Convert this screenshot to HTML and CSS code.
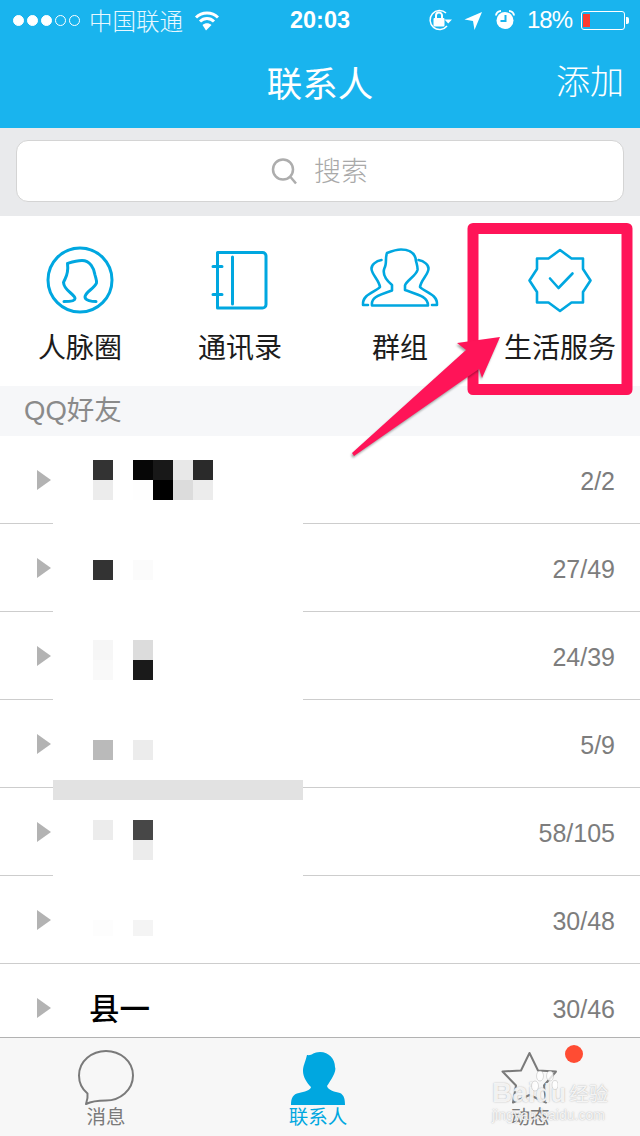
FILE: index.html
```html
<!DOCTYPE html>
<html lang="zh-CN">
<head>
<meta charset="utf-8">
<title>联系人</title>
<link rel="stylesheet" href="styles.css">
</head>
<body>
<div class="app">
  <header class="header">
    <div class="status">
      <div class="status-left">
        <div class="signal"><i class="dot on"></i><i class="dot on"></i><i class="dot on"></i><i class="dot"></i><i class="dot"></i></div>
        <span class="carrier">中国联通</span>
        <svg class="wifi" viewBox="195 9 25 21" width="25" height="21"><path d="M197 16.5C203 10.5 213 10.5 219 16.5" class="wf"/><path d="M201 20.5C205 16.5 211 16.5 215 20.5" class="wf"/><path d="M203.500 24L207 29.500 212.500 24C210 21.500 206 21.500 203.500 24Z" class="wfill"/></svg>
      </div>
      <div class="time">20:03</div>
      <div class="status-right">
        <svg class="st-icons" viewBox="428 8 88 24" width="88" height="24">
          <path d="M446 13A9.500 9.500 0 1 0 447 26" class="st-line"/>
          <path d="M444.500 19.500H452L448.200 23.500Z" class="st-fill"/>
          <rect x="433.500" y="18" width="11" height="8.500" rx="1" class="st-fill"/>
          <path d="M436 18V15.500A3 3 0 0 1 442 15.500V18" class="st-line2"/>
          <path d="M464.500 19.500L482 12 474.500 30 473 21Z" class="st-fill"/>
          <circle cx="505" cy="20.500" r="8.500" class="st-fill"/>
          <path d="M505.500 15V21H500.500" class="st-blue"/>
          <path d="M496 15.500A5 5 0 0 1 501 11" class="st-line2"/>
          <path d="M514 15.500A5 5 0 0 0 509 11" class="st-line2"/>
        </svg>
        <span class="pct">18%</span>
        <div class="battery"><div class="battery-level"></div></div>
        <div class="battery-nub"></div>
      </div>
    </div>
    <div class="nav">
      <h1 class="nav-title">联系人</h1>
      <span class="nav-action">添加</span>
    </div>
  </header>

  <div class="search-wrap">
    <div class="search">
      <svg viewBox="270 155 30 30" width="30" height="30"><circle cx="283" cy="168.500" r="10" class="search-ic"/><path d="M290.500 176L296 182.500" class="search-ic"/></svg>
      <span>搜索</span>
    </div>
  </div>

  <nav class="quick">
    <a class="quick-item">
      <svg viewBox="40 240 80 80" width="80" height="80"><circle cx="80" cy="280" r="32" class="ic"/><path d="M64 301.500C68 301.500 75 301 75 298.500C75 294 64 291 63.500 282.500C65 278 69 275 67.500 263.500C72 262 76 260.500 82 260.500C90 260.500 94 268 95 275C96 279 97 281 96.500 283C94 289 85 292 85 297C85 300.500 92 301.500 96 301.500" class="ic"/></svg>
      <span>人脉圈</span>
    </a>
    <a class="quick-item">
      <svg viewBox="200 240 80 80" width="80" height="80"><path d="M217.500 252.500H262.500A3.500 3.500 0 0 1 266 256V304.500A3.500 3.500 0 0 1 262.500 308H217.500Z" class="ic"/><path d="M232.500 257V304M213 266.500H222M213 294.500H222" class="ic"/></svg>
      <span>通讯录</span>
    </a>
    <a class="quick-item">
      <svg viewBox="360 240 80 80" width="80" height="80"><path d="M372 305.500C371 298 376 296 392 290.500V285C385 279 382 274 384.500 268C387 264 385 258 387 253C392 251 396 249.500 401 249.500C409 249.500 414 253 415.500 258C416 263 418 266 417.500 270C416 276 406 281 405 285.500V290C416 294 428 296 428 305.500Z" class="ic2"/><path d="M381.500 260C376 261 371 265 371.500 269C372 275 379 280 380 287C376 292 362 294 363 305H368" class="ic2"/><path d="M418.500 260C424 261 429 265 428.500 269C428 275 421 280 420 287C424 292 438 294 437 305H432" class="ic2"/></svg>
      <span>群组</span>
    </a>
    <a class="quick-item">
      <svg viewBox="520 240 80 80" width="80" height="80"><path d="M560 250L571.500 258.500H583V269L590.500 280.500 583 292V302.500H571.500L560 311 548.500 302.500H537V292L529.500 280.500 537 269V258.500H548.500Z" class="ic2"/><path d="M550 278.500L558.500 288 572.500 273.500" class="ic2"/></svg>
      <span>生活服务</span>
    </a>
  </nav>

  <div class="section">QQ好友</div>

  <div class="list">
    <div class="row"><i class="tri"></i><span class="count">2/2</span></div>
    <div class="row"><i class="tri"></i><span class="count">27/49</span></div>
    <div class="row"><i class="tri"></i><span class="count">24/39</span></div>
    <div class="row"><i class="tri"></i><span class="count">5/9</span></div>
    <div class="row"><i class="tri"></i><span class="count">58/105</span></div>
    <div class="row"><i class="tri"></i><span class="count">30/48</span></div>
    <div class="row"><i class="tri"></i><span class="name">县一</span><span class="count">30/46</span></div>

    <div class="mosaic">
      <b class="mask"></b>
      <b class="bar"></b>
      <b class="c2 y1 g33"></b><b class="c2 y2 ge"></b>
      <b class="c4 y1 g06"></b><b class="c4 y2 gfe"></b>
      <b class="c5 y1 g18"></b><b class="c5 y2 g00"></b>
      <b class="c6 y1 ge8"></b><b class="c6 y2 gdc"></b>
      <b class="c7 y1 g2a"></b><b class="c7 y2 ge"></b>
      <b class="c2 y6 g33"></b><b class="c4 y6 gfb"></b>
      <b class="c2 y10 gf6"></b><b class="c2 y11 gf9"></b>
      <b class="c4 y10 gdc"></b><b class="c4 y11 g1a"></b>
      <b class="c2 y15 gba"></b><b class="c4 y15 ge"></b>
      <b class="c2 y19 ge"></b><b class="c4 y19 g47"></b><b class="c4 y20 ge"></b>
      <b class="c2 y24 gfd short"></b><b class="c4 y24 gf4 short"></b>
    </div>
  </div>

  <footer class="tabs">
    <a class="tab">
      <svg viewBox="66 1047 80 60" width="80" height="60"><path d="M87.500 1093.500C82 1089 79 1082 79 1075.500C79 1061 92 1051 106 1051C120 1051 133 1061 133 1075.500C133 1090 120 1100.500 106 1100.500C98 1100.500 92 1101 86 1104C87.500 1100 88 1097 87.500 1093.500Z" class="tab-line"/></svg>
      <span>消息</span>
    </a>
    <a class="tab active">
      <svg viewBox="278 1047 80 60" width="80" height="60"><path d="M291 1105C291 1098 293 1094 299 1093C304 1092 311 1090 311 1087C307 1083 303 1077 303 1071C303 1066 305 1063 307 1055C312 1056 313 1052 320 1052C329 1052 335 1059 335 1067C337 1071 331 1080 327 1086C328 1090 335 1092 340 1093C344 1095 345 1099 345 1105Z"/></svg>
      <span>联系人</span>
    </a>
    <a class="tab">
      <svg viewBox="491 1047 80 60" width="80" height="60"><path d="M530.500 1053L539 1070.500 557 1071.500 545 1085.500 547 1102.500 530.500 1095 514 1102.500 517 1085.500 503.500 1071.500 522 1070.500Z" class="tab-line"/></svg>
      <span>动态</span>
      <i class="badge"></i>
    </a>
  </footer>

  <div class="watermark">
    <div class="wm-top"><span>Bai</span><span class="wm-du">du</span><span class="wm-cn">经验</span></div>
    <div class="wm-url">jingyan.baidu.com</div>
    <svg viewBox="0 0 28 36" width="28" height="36" class="paw"><ellipse cx="5" cy="16" rx="3.500" ry="5"/><ellipse cx="10" cy="6" rx="3.500" ry="5"/><ellipse cx="20" cy="6" rx="3.500" ry="5"/><ellipse cx="25" cy="15" rx="3" ry="4.500"/></svg>
  </div>

  <svg class="annotation" viewBox="0 0 640 1136" width="640" height="1136">
    <path class="frame" d="M473 228.500H627V389.500H473Z"/>
    <path class="arrow" d="M352 453L466 350 457 343 500 337 482 378 479 369 354 456Z"/>
  </svg>
</div>
</body>
</html>
```
FILE: styles.css
```css
* { box-sizing: border-box; }
html, body { margin: 0; padding: 0; background: #fff; }
body { font-family: "Liberation Sans", "Noto Sans CJK SC", sans-serif; }
i, b { display: block; }
svg { display: block; flex: none; }

.app {
  position: relative;
  width: 640px;
  height: 1136px;
  overflow: hidden;
  display: flex;
  flex-direction: column;
}

/* header */
.header { height: 128px; background: #19b4ee; color: #fff; flex: none; }
.status {
  height: 40px;
  display: grid;
  grid-template-columns: 1fr auto 1fr;
  align-items: center;
}
.status-left { display: flex; align-items: center; padding-left: 13px; }
.signal { display: flex; gap: 3px; }
.dot { width: 11px; height: 11px; border-radius: 50%; border: 1px solid #fff; }
.dot.on { background: #fff; }
.carrier { margin-left: 9px; font: 300 23.5px/40px "Noto Sans CJK SC", sans-serif; color: #e8f8ff; }
.wifi { margin-left: 11px; }
.wf { fill: none; stroke: #fff; stroke-width: 3; }
.wfill { fill: #fff; }
.time { font: 700 23.5px/40px "Liberation Sans", sans-serif; }
.status-right { display: flex; align-items: center; justify-content: flex-end; padding-right: 11px; }
.st-line { fill: none; stroke: #fff; stroke-width: 1.5; }
.st-line2 { fill: none; stroke: #fff; stroke-width: 2; }
.st-fill { fill: #fff; }
.st-blue { fill: none; stroke: #19b4ee; stroke-width: 2; }
.pct { margin-left: 11px; font: 300 24px/40px "Liberation Sans", sans-serif; letter-spacing: -1px; }
.battery {
  width: 44px;
  height: 19px;
  margin-left: 9px;
  border: 1px solid #fff;
  border-radius: 3px;
  padding: 2px 1px;
}
.battery-level { width: 7px; height: 100%; background: #ff3b30; }
.battery-nub { width: 3px; height: 7px; background: #fff; border-radius: 0 2px 2px 0; margin-left: 1px; }

.nav { height: 88px; position: relative; display: flex; align-items: center; justify-content: center; }
.nav-title { margin: 0; padding-bottom: 4px; font: 400 35.5px/48px "Noto Sans CJK SC", sans-serif; }
.nav-action {
  position: absolute;
  right: 16px;
  top: 16px;
  font: 300 34px/48px "Noto Sans CJK SC", sans-serif;
}

/* search */
.search-wrap { height: 88px; flex: none; background: #e9eaec; padding: 12px 16px 14px; }
.search {
  height: 62px;
  background: #fff;
  border: 1px solid #d4d4d4;
  border-radius: 12px;
  display: flex;
  align-items: center;
  justify-content: center;
  gap: 14px;
  padding-right: 2px;
  color: #a9a9a9;
  font: 300 27px/38px "Noto Sans CJK SC", sans-serif;
}
.search span { padding-bottom: 2px; }
.search-ic { fill: none; stroke: #adadad; stroke-width: 2.500; }

/* quick entries */
.quick { height: 170px; flex: none; background: #fff; display: grid; grid-template-columns: repeat(4, 160px); }
.quick-item {
  display: flex;
  flex-direction: column;
  align-items: center;
  padding-top: 24px;
  color: #1c1c1c;
  font: 400 28px/40px "Noto Sans CJK SC", sans-serif;
}
.quick-item span { margin-top: 6px; }
.ic { fill: none; stroke: #00a7e0; stroke-width: 3; stroke-linecap: round; stroke-linejoin: round; }
.ic2 { fill: none; stroke: #00a7e0; stroke-width: 2.600; stroke-linecap: round; stroke-linejoin: round; }

/* section title */
.section {
  height: 50px;
  flex: none;
  background: #f6f7f9;
  color: #8a8a8a;
  padding-left: 24px;
  font: 400 27.500px/50px "Liberation Sans", "Noto Sans CJK SC", sans-serif;
}

/* list */
.list { position: relative; flex: 1; min-height: 0; overflow: hidden; background: #fff; }
.row {
  height: 88px;
  border-bottom: 1px solid #cdcdcd;
  display: flex;
  align-items: center;
  padding: 0 25px 0 37px;
  position: relative;
}
.tri {
  width: 14px;
  height: 20px;
  margin-top: 1px;
  background: #b3b3b3;
  clip-path: polygon(0 0, 100% 50%, 0 100%);
}
.name { margin-left: 38px; margin-top: -2px; font: 500 30.500px/40px "Noto Sans CJK SC", sans-serif; color: #000; }
.count { margin-left: auto; margin-top: 2px; color: #7d7d7d; font: 400 25px/40px "Liberation Sans", sans-serif; }

.mosaic {
  position: absolute;
  left: 53px;
  top: 4px;
  display: grid;
  grid-template-columns: repeat(12, 20px) 10px;
  grid-template-rows: repeat(25, 20px);
}
.mask { grid-column: 1 / -1; grid-row: 1 / 23; background: #fff; }
.bar { grid-column: 1 / -1; grid-row: 18; background: #e2e2e2; }
.short { height: 16px; }
.c2 { grid-column: 3; } .c4 { grid-column: 5; } .c5 { grid-column: 6; } .c6 { grid-column: 7; } .c7 { grid-column: 8; }
.y1 { grid-row: 2; } .y2 { grid-row: 3; } .y6 { grid-row: 7; } .y10 { grid-row: 11; } .y11 { grid-row: 12; }
.y15 { grid-row: 16; } .y19 { grid-row: 20; } .y20 { grid-row: 21; } .y24 { grid-row: 25; }
.g00 { background: #000; } .g06 { background: #060606; } .g18 { background: #181818; } .g1a { background: #1a1a1a; }
.g2a { background: #2a2a2a; } .g33 { background: #333; } .g47 { background: #474747; } .gba { background: #bababa; }
.gdc { background: #dcdcdc; } .ge8 { background: #e8e8e8; } .ge { background: #ececec; } .gf4 { background: #f4f4f4; }
.gf6 { background: #f6f6f6; } .gf9 { background: #f9f9f9; } .gfb { background: #fbfbfb; } .gfd { background: #fdfdfd; } .gfe { background: #fefefe; }

/* tab bar */
.tabs {
  height: 99px;
  flex: none;
  background: #f7f7f7;
  border-top: 1px solid #b2b2b2;
  display: grid;
  grid-template-columns: repeat(3, 212px);
}
.tab {
  position: relative;
  display: flex;
  flex-direction: column;
  align-items: center;
  padding-top: 9px;
  color: #7a7a7a;
  font: 400 19.500px/24px "Noto Sans CJK SC", sans-serif;
}
.tab span { margin-top: -3px; }
.tab-line { fill: none; stroke: #7a7a7a; stroke-width: 2; stroke-linejoin: round; }
.tab.active { color: #00a7e0; }
.tab.active svg { fill: #00a7e0; }
.badge {
  position: absolute;
  left: 141px;
  top: 7px;
  width: 18px;
  height: 18px;
  border-radius: 50%;
  background: #ff4c33;
}

/* watermark */
.watermark {
  position: absolute;
  left: 492px;
  top: 1081px;
  width: 116px;
  color: rgba(255, 255, 255, .85);
  text-shadow: 0 0 1.5px rgba(140, 140, 140, .75);
}
.wm-top { display: flex; align-items: center; height: 24px; font: 700 28px/24px "Liberation Sans", sans-serif; white-space: nowrap; }
.wm-du { font-size: 25px; }
.wm-cn { margin-left: 3px; font: 400 19.500px/24px "Noto Sans CJK SC", sans-serif; }
.wm-url { margin-top: 2px; font: 400 14px/16px "Liberation Sans", sans-serif; white-space: nowrap; }
.paw {
  position: absolute;
  left: 38px;
  top: -11px;
  fill: rgba(255, 255, 255, .8);
  stroke: rgba(170, 170, 170, .6);
  stroke-width: .7;
}

/* annotation */
.annotation { position: absolute; left: 0; top: 0; pointer-events: none; }
.frame { fill: none; stroke: #ff1458; stroke-width: 11; stroke-linejoin: round; }
.arrow { fill: #ff1458; filter: drop-shadow(-1px 2px 1px rgba(0, 0, 0, .35)); }
```
